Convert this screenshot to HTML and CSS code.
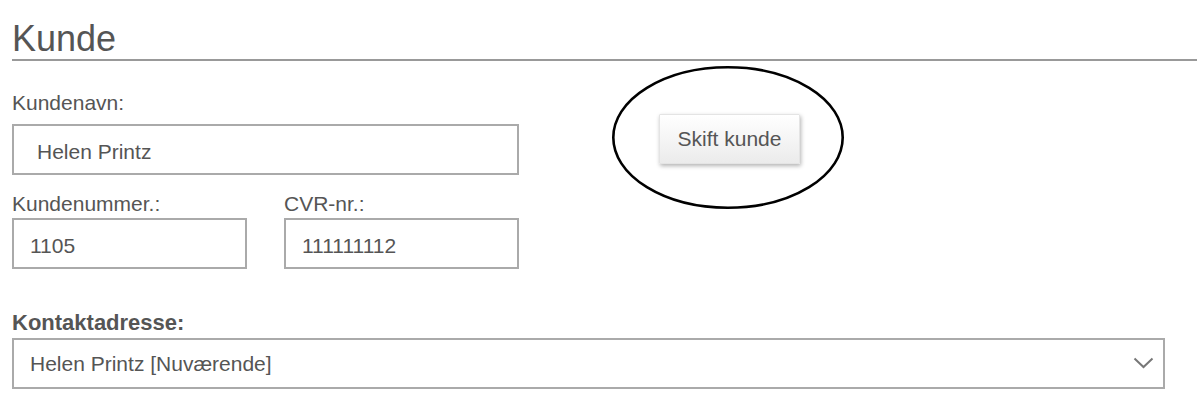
FILE: index.html
```html
<!DOCTYPE html>
<html>
<head>
    <title>Kunde</title>
    <meta charset="UTF-8">
    <link rel="stylesheet" href="styles.css">
</head>
<body>
    <div class="page">
        <h1>Kunde</h1>

        <div class="top-row">
            <div class="field name-field">
                <label for="kundenavn">Kundenavn:</label>
                <input id="kundenavn" class="input input-wide" type="text" value="Helen Printz">
            </div>
            <div class="switch">
                <button class="btn" type="button">Skift kunde</button>
                <!-- annotation ring round the button -->
                <svg class="ring" width="232" height="143" viewBox="0 0 232 143">
                    <ellipse cx="116" cy="71.5" rx="114.7" ry="70.2" fill="none" stroke="#000" stroke-width="2.6"/>
                </svg>
            </div>
        </div>

        <div class="pair-row">
            <div class="field small-field">
                <label for="kundenummer">Kundenummer.:</label>
                <input id="kundenummer" class="input" type="text" value="1105">
            </div>
            <div class="field small-field">
                <label for="cvr">CVR-nr.:</label>
                <input id="cvr" class="input" type="text" value="111111112">
            </div>
        </div>

        <div class="contact">
            <label class="bold-label" for="adresse">Kontaktadresse:</label>
            <div class="select-wrap">
                <select id="adresse" class="select">
                    <option>Helen Printz [Nuværende]</option>
                </select>
                <svg class="chevron" width="21" height="12" viewBox="0 0 21 12">
                    <polyline points="1.5,1.5 10.5,10 19.5,1.5" fill="none" stroke="#777" stroke-width="2"/>
                </svg>
            </div>
        </div>
    </div>
</body>
</html>
```

FILE: styles.css
```css
body {
    margin: 0;
    font-family: "Liberation Sans", Arial, sans-serif;
    color: #555;
    background: #fff;
}
.page {
    padding-left: 12px;
}
h1 {
    margin: 19px 0 0;
    font-size: 36px;
    font-weight: normal;
    line-height: 40px;
    color: #555;
    border-bottom: 2px solid #999;
}
label {
    display: block;
    font-size: 21px;
    line-height: 24px;
}
.input,
.select {
    display: block;
    box-sizing: border-box;
    height: 51px;
    margin: 0;
    border: 2px solid #aaa;
    border-radius: 0;
    background: #fff;
    color: #555;
    font-family: "Liberation Sans", Arial, sans-serif;
    font-size: 21px;
    outline: none;
}
.input {
    padding: 4px 16px 0;
}
.top-row {
    display: flex;
    align-items: flex-start;
    margin-top: 30px;
}
.name-field {
    width: 507px;
}
.name-field .input {
    margin-top: 9px;
}
.input-wide {
    width: 507px;
    padding-left: 23px;
}
.switch {
    position: relative;
    margin: 23px 0 0 140px;
}
.btn {
    display: block;
    width: 141px;
    height: 50px;
    padding: 0;
    border: 1px solid #e4e4e4;
    border-radius: 1px;
    background: linear-gradient(#ffffff, #ebebeb);
    box-shadow: 1px 2px 4px rgba(0, 0, 0, 0.3);
    color: #555;
    font-family: "Liberation Sans", Arial, sans-serif;
    font-size: 21px;
}
.ring {
    position: absolute;
    left: -47px;
    top: -48px;
    pointer-events: none;
}
.pair-row {
    display: flex;
    gap: 37px;
    margin-top: 17px;
}
.small-field {
    width: 235px;
}
.small-field .input {
    width: 235px;
    margin-top: 2px;
}
.contact {
    margin-top: 41px;
}
.bold-label {
    font-size: 22px;
    font-weight: bold;
    line-height: 25px;
}
.select-wrap {
    position: relative;
    width: 1153px;
    margin-top: 3px;
}
.select {
    width: 1153px;
    padding: 0 50px 0 16px;
    appearance: none;
    -webkit-appearance: none;
}
.chevron {
    position: absolute;
    right: 11px;
    top: 19px;
    pointer-events: none;
}
```
